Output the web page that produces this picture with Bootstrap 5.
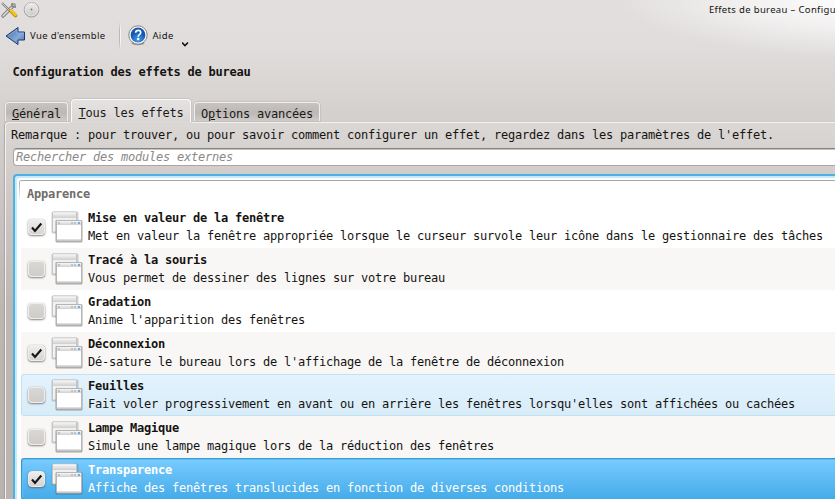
<!DOCTYPE html>
<html lang="fr">
<head>
<meta charset="utf-8">
<meta name="viewport" content="width=device-width, initial-scale=1">
<title>Effets de bureau – Configuration</title>
<link href="https://cdn.jsdelivr.net/npm/bootstrap@5.3.0/dist/css/bootstrap.min.css" rel="stylesheet">
<style>
html,body{height:499px;overflow:hidden}
body{font:12px/18px "DejaVu Sans Mono",monospace;letter-spacing:-.224px;color:#151311;white-space:nowrap;
background:radial-gradient(ellipse 245px 58px at 865px 0,#fff 0,#fff9 45%,#fff0 100%),linear-gradient(#e2dfde 0,#dfdcdb 50px,#d6d2cf 105px,#bdb7b4 310px,#b9b3b0 499px)}
svg{display:block;flex:none}
.window{height:499px}
.titlebar{height:20px;padding:1px 0 0 1px}
.ui-small{font:9.5px/14px "Noto Sans",sans-serif;letter-spacing:.36px}
.caption{margin-left:669px;margin-top:2px;letter-spacing:.34px}
.toolbar{height:32px;padding:1px 0 0 5px}
.sep{width:2px;height:28px;margin:0 7px 0 14px;background:linear-gradient(90deg,#bcb8b6 50%,#f6f5f4 50%);-webkit-mask:linear-gradient(transparent,#000 30%,#000 70%,transparent)}
.heading{font:bold 12px/18px "DejaVu Sans Mono",monospace;margin:12px 0 0 12.5px}
.tabs{height:22px;margin:19px 0 0 5px;gap:3px;position:relative;z-index:1}
.tabs .nav-link{height:19px;margin:2px 0 1px;padding:3px 6px 0;line-height:17px;color:#1b1917;border:1px solid #efeeed;border-bottom:0;border-radius:4px 4px 0 0;background:linear-gradient(#c7c3c0,#bdb8b5 55%,#cfcbc8);box-shadow:0 0 1px 1px #a9a4a155}
.tabs .nav-link.active{height:23px;margin:-1px 0 0;padding:5px 6.5px 0;border-color:#fbfafa;background:linear-gradient(#e5e3e2,#d9d6d4)}
.panel{margin-left:5px;border:solid #f3f2f1;border-width:1px 0 0 1px;border-radius:4px 0 0;height:377px;background:linear-gradient(#dad7d4,#d2cdca 50px,#beb8b5 180px,#bab4b1);box-shadow:-1px 0 1px #928c8a88}
.note{padding:3px 0 0 5px;height:25px}
.search{height:18px;margin-left:7px;padding:0 0 0 2px;border:1px solid #aaa6a4;border-top:1px solid #858280;border-right:0;border-radius:4px 0 0 4px;background:#fff;box-shadow:inset 0 1px #c5c3c2;color:#8b8987;font-style:italic;line-height:17px}
.list{margin:8px 0 0 7px;height:326px;padding:4px 0 0 4px;border:solid #4fb1e1;border-width:2px 0 0 2px;border-radius:4px 0 0;background:#fff;box-shadow:inset 2px 2px 1px #c3e9fa}
.group-title{height:26px;padding:4px 0 0 8px;color:#6f6c6a;font-weight:bold;border-top:1px solid #a9a7a6;border-radius:3px 0 0;background:linear-gradient(#aaa8a7,#fff 20px) 0 0/1px 100% no-repeat}
.effects{margin-left:2px}
.effect{height:42px;padding:0 0 0 6px;border:solid transparent;border-width:1px 0 1px 1px}
.effect.alt{background:#f8f7f6}
.effect.hovered{background:linear-gradient(#e3f3fe,#d8ecf8);border-color:#c0e2f3;border-radius:3px 0 0 3px}
.effect.selected{background:linear-gradient(#78cbff,#45abe8);border-color:#379bd2;box-shadow:inset 1px 1px #61bdf1;border-radius:3px 0 0 3px;color:#fff}
.check{width:17px;height:16px;border:1px solid #eeedec;border-radius:4px;background:linear-gradient(#d9d7d4,#cfccc9);box-shadow:0 1px 2px #5f5b59bb,0 0 1px #77737188}
.check.on{background:linear-gradient(#efeeed,#d6d3d1)}
.effect .win{margin:0 5px 0 6px}
.effect b{display:block}
</style>
</head>
<body>
<svg width="0" height="0" class="position-absolute">
<defs>
<linearGradient id="bar" x1="0" y1="0" x2="0" y2="1"><stop stop-color="#f7f7f7"/><stop offset="1" stop-color="#cfcfcf"/></linearGradient>
<symbol id="windows" viewBox="0 0 32 32">
<rect x=".5" y=".5" width="27" height="22" rx="1.5" fill="#666" opacity=".3"/>
<rect x="1.500" y="1" width="24" height="20" rx="1" fill="#f4f4f4" stroke="#c4c4c4"/>
<rect x="2" y="1.500" width="23" height="5.500" fill="url(#bar)"/><rect x="3" y="7" width="21" height="13" fill="#f0f0f0"/>
<rect x="4.500" y="9" width="27" height="22.500" rx="1.500" fill="#444" opacity=".45"/>
<rect x="5.500" y="9.500" width="25" height="20.500" rx="1" fill="#dedede" stroke="#b5b5b5"/>
<rect x="6" y="10" width="24" height="4" fill="url(#bar)"/><rect x="6" y="14" width="24" height="14" fill="#fff"/>
<path d="M7 11h2v2H7zM20 11h2v2h-2zM23 11h2v2h-2z" fill="#bfc3c6"/><path d="M27 11h2v2h-2z" fill="#72abdc"/>
</symbol>
<symbol id="tick" viewBox="0 0 15 15"><path d="M3 7.500 6 11 12.300 3.500" fill="none" stroke="#171513" stroke-width="2.100"/></symbol>
</defs>
</svg>
<main class="window d-flex flex-column">
<header class="titlebar d-flex">
<svg width="17" height="17" viewBox="0 0 17 17"><path d="M2 15 13 4" stroke="#777" stroke-width="3.200" stroke-linecap="round"/><path d="M2 15 13 4" stroke="#dedede" stroke-width="1.600" stroke-linecap="round"/><path d="M11 2 11.500 5.500 15 6" fill="none" stroke="#8b8b8b" stroke-width="2"/><path d="m1 2 8 8" stroke="#777" stroke-width="2"/><path d="m1 2 8 8" stroke="#eee" stroke-width=".7"/><path d="m10 10 4.500 4.500" stroke="#b78309" stroke-width="3.600" stroke-linecap="round"/><path d="m10 9.500 4.500 4.500" stroke="#f5c51b" stroke-width="2.600" stroke-linecap="round"/></svg>
<svg width="18" height="18" viewBox="0 0 18 18" class="ms-1"><defs><linearGradient id="knob" x1="0" y1="0" x2="0" y2="1"><stop stop-color="#f0efee"/><stop offset="1" stop-color="#c9c6c4"/></linearGradient></defs><circle cx="9.500" cy="8.800" r="7.300" fill="url(#knob)" stroke="#9f9b99"/><circle cx="9.500" cy="8.300" r="6.500" fill="none" stroke="#f2f1f0" stroke-width=".6"/><circle cx="9.500" cy="8.500" r=".9" fill="#777"/></svg>
<span class="ui-small caption">Effets de bureau – Configu</span>
</header>
<nav class="toolbar d-flex align-items-center ui-small">
<svg width="21" height="20" viewBox="0 0 21 20"><defs><linearGradient id="arrow" x1="0" y1="0" x2="1" y2="1"><stop stop-color="#3766a7"/><stop offset=".6" stop-color="#84a8d8"/><stop offset="1" stop-color="#446ead"/></linearGradient></defs><path d="M1 10 13 1.500V6h6.500v8H13v4.500z" fill="url(#arrow)" stroke="#1e3a6b"/><path d="M3 10 12 3.500V7h6.500v1" fill="none" stroke="#9dbbe4" stroke-width=".6"/></svg>
<span class="ms-1">Vue d'ensemble</span>
<span class="sep"></span>
<svg width="20" height="21" viewBox="0 0 20 21"><defs><radialGradient id="help" cy=".8"><stop stop-color="#4ba2ef"/><stop offset="1" stop-color="#1457ae"/></radialGradient></defs><ellipse cx="10" cy="18.200" rx="6.500" ry="2" fill="#555" opacity=".55"/><circle cx="10" cy="10" r="9.200" fill="#fafafa" stroke="#777" stroke-width=".9"/><circle cx="10" cy="10" r="7.400" fill="url(#help)"/><path d="M7.600 7.800q.2-2.400 2.600-2.400 2.500 0 2.500 2.200 0 1.200-1.300 2-1.200.8-1.200 2.100" fill="none" stroke="#fff" stroke-width="1.700"/><circle cx="10.200" cy="14" r="1.200" fill="#fff"/></svg>
<span class="ms-1 me-1">Aide</span>
<svg width="8" height="6" viewBox="0 0 8 6" class="ms-1 mt-3"><path d="m0 1.500 3 3 3-3" fill="none" stroke="#151311" stroke-width="1.600"/></svg>
</nav>
<h1 class="heading mb-0">Configuration des effets de bureau</h1>
<nav class="nav tabs flex-nowrap flex-shrink-0">
<a class="nav-link" href="#"><u>G</u>énéral</a>
<a class="nav-link active" href="#"><u>T</u>ous les effets</a>
<a class="nav-link" href="#">O<u>p</u>tions avancées</a>
</nav>
<section class="panel flex-shrink-0">
<div class="note">Remarque : pour trouver, ou pour savoir comment configurer un effet, regardez dans les paramètres de l'effet.</div>
<div class="search">Rechercher des modules externes</div>
<div class="list">
<div class="group-title">Apparence</div>
<div class="effects">
<div class="effect d-flex align-items-center"><span class="check on"><svg width="15" height="15"><use href="#tick"/></svg></span><svg class="win" width="32" height="32"><use href="#windows"/></svg><div><b>Mise en valeur de la fenêtre</b>Met en valeur la fenêtre appropriée lorsque le curseur survole leur icône dans le gestionnaire des tâches</div></div>
<div class="effect alt d-flex align-items-center"><span class="check"></span><svg class="win" width="32" height="32"><use href="#windows"/></svg><div><b>Tracé à la souris</b>Vous permet de dessiner des lignes sur votre bureau</div></div>
<div class="effect d-flex align-items-center"><span class="check"></span><svg class="win" width="32" height="32"><use href="#windows"/></svg><div><b>Gradation</b>Anime l'apparition des fenêtres</div></div>
<div class="effect alt d-flex align-items-center"><span class="check on"><svg width="15" height="15"><use href="#tick"/></svg></span><svg class="win" width="32" height="32"><use href="#windows"/></svg><div><b>Déconnexion</b>Dé-sature le bureau lors de l'affichage de la fenêtre de déconnexion</div></div>
<div class="effect hovered d-flex align-items-center"><span class="check"></span><svg class="win" width="32" height="32"><use href="#windows"/></svg><div><b>Feuilles</b>Fait voler progressivement en avant ou en arrière les fenêtres lorsqu'elles sont affichées ou cachées</div></div>
<div class="effect alt d-flex align-items-center"><span class="check"></span><svg class="win" width="32" height="32"><use href="#windows"/></svg><div><b>Lampe Magique</b>Simule une lampe magique lors de la réduction des fenêtres</div></div>
<div class="effect selected d-flex align-items-center"><span class="check on"><svg width="15" height="15"><use href="#tick"/></svg></span><svg class="win" width="32" height="32"><use href="#windows"/></svg><div><b>Transparence</b>Affiche des fenêtres translucides en fonction de diverses conditions</div></div>
</div>
</div>
</section>
</main>
<script src="https://cdn.jsdelivr.net/npm/bootstrap@5.3.0/dist/js/bootstrap.bundle.min.js"></script>
</body>
</html>
